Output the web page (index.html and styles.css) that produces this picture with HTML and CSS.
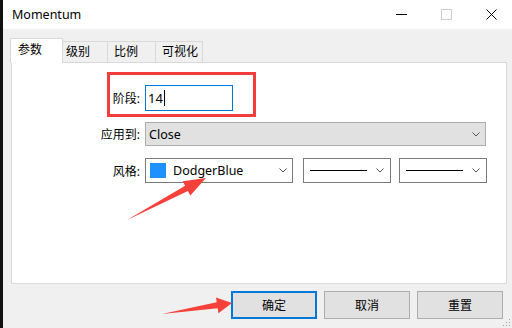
FILE: index.html
```html
<!DOCTYPE html>
<html lang="zh-CN">

<head>
    <meta charset="UTF-8">
    <title>Momentum</title>
    <link rel="stylesheet" href="styles.css">
</head>

<body>
    <div class="screen">
        <div class="window">
            <div class="titlebar">
                <span class="title">Momentum</span>
                <div class="controls">
                    <div class="ctrl">
                        <svg width="11" height="11" viewBox="0 0 11 11"><line x1="0" y1="5.5" x2="11" y2="5.5" stroke="#000" stroke-width="1"/></svg>
                    </div>
                    <div class="ctrl">
                        <svg width="11" height="11" viewBox="0 0 11 11"><rect x="0.5" y="0.5" width="10" height="10" fill="none" stroke="#cccccc" stroke-width="1"/></svg>
                    </div>
                    <div class="ctrl">
                        <svg width="11" height="11" viewBox="0 0 11 11"><path d="M0.5 0.5 L10.5 10.5 M10.5 0.5 L0.5 10.5" stroke="#000" stroke-width="1" fill="none"/></svg>
                    </div>
                </div>
            </div>

            <div class="tabs">
                <div class="tab active">参数</div>
                <div class="tab tab-2">级别</div>
                <div class="tab tab-3">比例</div>
                <div class="tab tab-4">可视化</div>
            </div>

            <div class="panel">
                <div class="row row-period">
                    <span class="label">阶段:</span>
                    <div class="field-input">14<span class="caret"></span></div>
                </div>
                <div class="row row-apply">
                    <span class="label">应用到:</span>
                    <div class="select select-wide">
                        <span>Close</span>
                        <svg class="chevron" width="8" height="5" viewBox="0 0 8 5"><path d="M0.5 0.5 L4 4 L7.5 0.5" fill="none" stroke="#555" stroke-width="1"/></svg>
                    </div>
                </div>
                <div class="row row-style">
                    <span class="label">风格:</span>
                    <div class="style-fields">
                        <div class="select select-white select-color">
                            <span class="swatch"></span>
                            <span>DodgerBlue</span>
                            <svg class="chevron" width="8" height="5" viewBox="0 0 8 5"><path d="M0.5 0.5 L4 4 L7.5 0.5" fill="none" stroke="#555" stroke-width="1"/></svg>
                        </div>
                        <div class="select select-white select-line">
                            <span class="line-sample"></span>
                            <svg class="chevron" width="8" height="5" viewBox="0 0 8 5"><path d="M0.5 0.5 L4 4 L7.5 0.5" fill="none" stroke="#555" stroke-width="1"/></svg>
                        </div>
                        <div class="select select-white select-line">
                            <span class="line-sample"></span>
                            <svg class="chevron" width="8" height="5" viewBox="0 0 8 5"><path d="M0.5 0.5 L4 4 L7.5 0.5" fill="none" stroke="#555" stroke-width="1"/></svg>
                        </div>
                    </div>
                </div>
            </div>

            <div class="buttons">
                <div class="btn default">确定</div>
                <div class="btn">取消</div>
                <div class="btn">重置</div>
            </div>
        </div>

        <!-- 标注：红框和箭头 -->
        <svg class="marks" width="512" height="328" viewBox="0 0 512 328">
            <rect x="108.5" y="73.5" width="146" height="42" fill="none" stroke="#f23d3d" stroke-width="3"/>
            <polygon points="127,220 185.1,185.7 182.7,181.3 206,178 190.3,195.5 187.9,191.1" fill="#f5413a"/>
            <polygon points="162,314 216.7,302.3 216,297.4 232,303 218.4,313.2 217.7,308.3" fill="#f5413a"/>
        </svg>

        <svg class="grip" width="8" height="8" viewBox="0 0 8 8">
            <rect x="6" y="0" width="1" height="1" fill="#a0a0a0"/>
            <rect x="3" y="3" width="1" height="1" fill="#a0a0a0"/>
            <rect x="6" y="3" width="1" height="1" fill="#a0a0a0"/>
            <rect x="0" y="6" width="1" height="1" fill="#a0a0a0"/>
            <rect x="3" y="6" width="1" height="1" fill="#a0a0a0"/>
            <rect x="6" y="6" width="1" height="1" fill="#a0a0a0"/>
        </svg>
    </div>
</body>

</html>
```

FILE: styles.css
```css
* {
    box-sizing: border-box;
}

body {
    margin: 0;
    background-color: #111;
    font-family: "Noto Sans", "Noto Sans CJK SC", sans-serif;
    font-size: 12px;
    color: #000;
}

.screen {
    position: relative;
    width: 512px;
    height: 328px;
    overflow: hidden;
}

.window {
    margin-left: 3px;
    width: 509px;
    height: 328px;
    background-color: #f0f0f0;
}

.titlebar {
    height: 29px;
    background-color: #fff;
    display: flex;
    align-items: center;
}

.title {
    padding-left: 9px;
    font-size: 12.5px;
}

.controls {
    margin-left: auto;
    margin-right: -2px;
    display: flex;
}

.ctrl {
    width: 45px;
    height: 29px;
    display: flex;
    align-items: center;
    justify-content: center;
}

/* 选项卡 */
.tabs {
    display: flex;
    align-items: flex-end;
    padding-left: 7px;
    margin-top: 9px;
    height: 24px;
}

.tab {
    height: 21px;
    border: 1px solid #d9d9d9;
    border-bottom: none;
    background-color: #f0f0f0;
    line-height: 20px;
    margin-left: -1px;
}

.tab.active {
    position: relative;
    z-index: 1;
    width: 53px;
    height: 25px;
    margin-bottom: -1px;
    margin-left: 0;
    background-color: #fff;
    padding-left: 7px;
    line-height: 22px;
}

.tab-2 {
    width: 46px;
    padding-left: 3px;
}

.tab-3 {
    width: 49px;
    padding-left: 6px;
}

.tab-4 {
    width: 48px;
    padding-left: 6px;
}

.panel {
    margin-left: 8px;
    width: 496px;
    height: 222px;
    background-color: #fff;
    border: 1px solid #d9d9d9;
    padding-top: 22px;
}

.row {
    display: flex;
    align-items: center;
}

.row-apply {
    margin-top: 11px;
}

.row-style {
    margin-top: 12px;
}

.label {
    width: 128px;
    margin-right: 5px;
    text-align: right;
}

.field-input {
    width: 88px;
    height: 26px;
    border: 1px solid #0078d7;
    background-color: #fff;
    padding-left: 2px;
    display: flex;
    align-items: center;
    font-size: 13px;
}

.caret {
    display: inline-block;
    width: 1px;
    height: 16px;
    background-color: #000;
    margin-left: 1px;
}

.select {
    height: 24px;
    border: 1px solid #adadad;
    background-color: #e1e1e1;
    display: flex;
    align-items: center;
    padding-left: 3px;
    font-size: 12.5px;
}

.select .chevron {
    margin-left: auto;
    margin-right: 5px;
}

.select-wide {
    width: 341px;
}

.style-fields {
    display: flex;
}

.select-white {
    height: 25px;
    background-color: #fff;
    border-color: #7a7a7a;
}

.select-color {
    width: 148px;
}

.swatch {
    width: 16px;
    height: 15px;
    background-color: #1e90ff;
    margin-left: 1px;
    margin-right: 7px;
}

.select-line {
    width: 88px;
    margin-left: 10px;
    padding-left: 6px;
}

.select-line + .select-line {
    margin-left: 8px;
}

.select-line .chevron {
    margin-right: 6px;
}

.line-sample {
    width: 57px;
    height: 1px;
    background-color: #000;
}

.buttons {
    display: flex;
    justify-content: flex-end;
    gap: 7px;
    padding-right: 9px;
    margin-top: 7px;
}

.btn {
    width: 86px;
    height: 28px;
    border: 1px solid #adadad;
    background-color: #e1e1e1;
    display: flex;
    align-items: center;
    justify-content: center;
}

.btn.default {
    border: 2px solid #0078d7;
}

.marks {
    position: absolute;
    left: 0;
    top: 0;
    pointer-events: none;
}

.grip {
    position: absolute;
    right: 1px;
    bottom: 1px;
}
```
